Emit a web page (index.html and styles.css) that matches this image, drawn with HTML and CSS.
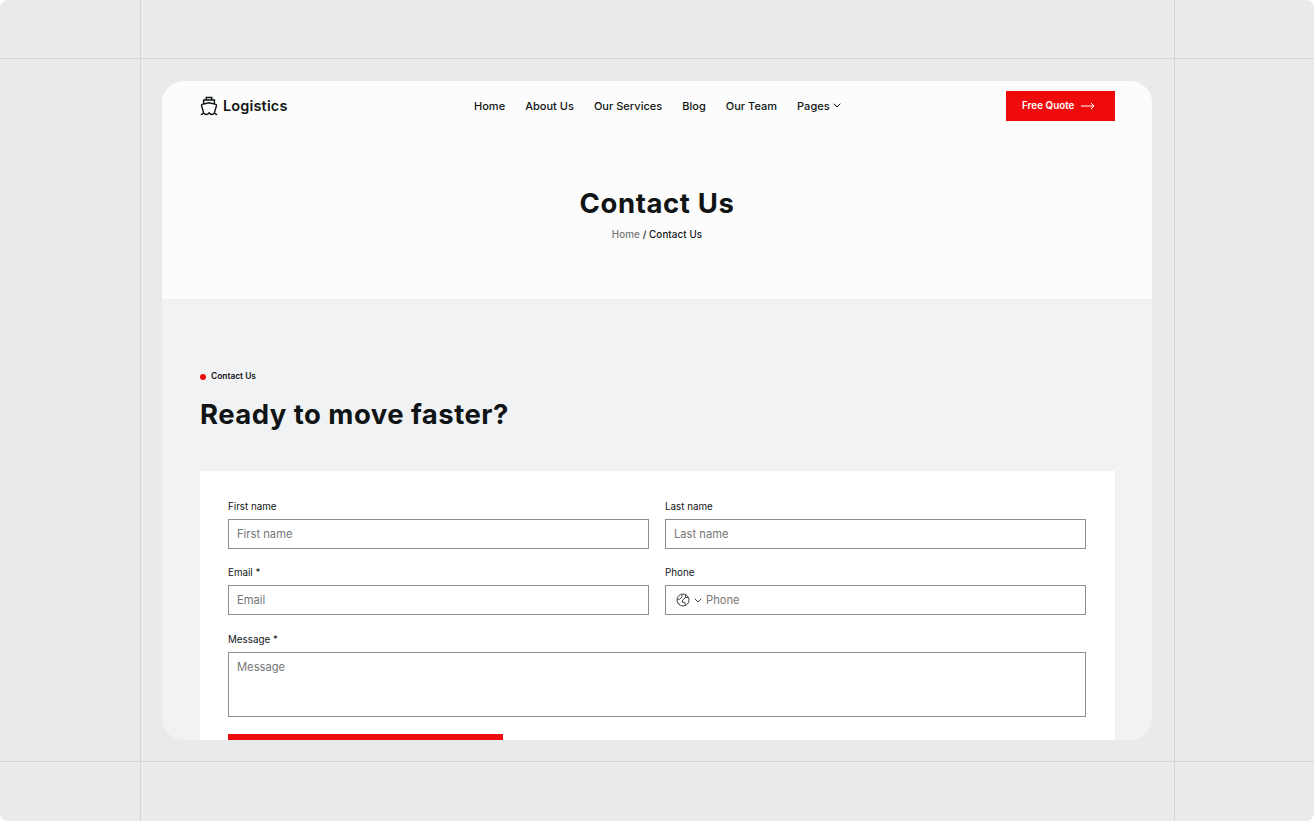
FILE: index.html
```
<!DOCTYPE html>
<html lang="en">
<head>
    <meta charset="UTF-8">
    <meta name="viewport" content="width=device-width, initial-scale=1.0">
    <title>Contact Us - Logistics</title>
    <link rel="stylesheet" href="styles.css">
</head>
<body>
    <div class="stage">
        <div class="page">
            <header class="header">
                <a class="logo" href="#">
                    <svg class="logo-icon" viewBox="0 0 18 20">
                        <path d="M6.200 4V1.500h5.600V4M3.600 8.500V4h10.800v4.500M3.500 16.500 1.500 9.500Q1.300 8.600 2.200 8.300L9 6.700l6.800 1.600q.9.300.7 1.200l-2 7M.8 18.500c1.700 0 2.200-.7 2.800-1.700.8 1.100 1.400 1.700 2.600 1.700S8.300 17.800 9 16.800c.8 1 1.500 1.700 2.700 1.700s2-.6 2.700-1.700c.7 1 1.200 1.700 2.800 1.700"/>
                    </svg>
                    <span class="logo-text">Logistics</span>
                </a>
                <nav class="nav">
                    <a href="#">Home</a>
                    <a href="#">About Us</a>
                    <a href="#">Our Services</a>
                    <a href="#">Blog</a>
                    <a href="#">Our Team</a>
                    <a class="nav-pages" href="#">Pages
                        <svg class="chevron" viewBox="0 0 8 5"><path d="M.7.7 4 4 7.300.7"/></svg>
                    </a>
                </nav>
                <a class="quote" href="#">
                    <span>Free Quote</span>
                    <svg class="arrow" viewBox="0 0 14 8"><path d="M0 4h13M10 1l3 3-3 3"/></svg>
                </a>
            </header>

            <section class="hero">
                <h1>Contact Us</h1>
                <p class="breadcrumb"><a href="#">Home</a> <span>/</span> <span>Contact Us</span></p>
            </section>

            <section class="contact">
                <p class="eyebrow">Contact Us</p>
                <h2>Ready to move faster?</h2>

                <form class="form">
                    <div class="field">
                        <label for="firstName">First name</label>
                        <input type="text" id="firstName" placeholder="First name">
                    </div>
                    <div class="field">
                        <label for="lastName">Last name</label>
                        <input type="text" id="lastName" placeholder="Last name">
                    </div>
                    <div class="field">
                        <label for="email">Email *</label>
                        <input type="email" id="email" placeholder="Email">
                    </div>
                    <div class="field">
                        <label for="phone">Phone</label>
                        <div class="phone">
                            <svg class="globe" viewBox="0 0 14 14">
                                <circle cx="7" cy="7" r="6"/>
                                <path d="M1.200 6.200h2.600l2.400-2.400L5.500 1.400M1.700 9.500 4.200 12.200M12.200 4.500H9.500L6.500 7v2.300h2.300l.6 3.100M9.500 4.500V1.800"/>
                            </svg>
                            <svg class="chevron" viewBox="0 0 8 5"><path d="M.7.7 4 4 7.300.7"/></svg>
                            <input type="tel" id="phone" placeholder="Phone">
                        </div>
                    </div>
                    <div class="field field-wide">
                        <label for="message">Message *</label>
                        <textarea id="message" placeholder="Message"></textarea>
                    </div>
                    <button class="submit" type="submit" aria-label="Submit"></button>
                </form>
            </section>
        </div>
    </div>
</body>
</html>
```
FILE: styles.css
```
* {
    box-sizing: border-box;
}
body {
    margin: 0;
    background: #fff;
    color: #101414;
    font-family: Inter, "Liberation Sans", sans-serif;
}
a {
    color: inherit;
    text-decoration: none;
}
svg {
    fill: none;
    stroke: currentColor;
    flex: none;
}
h1, h2, p {
    margin: 0;
}

/* backdrop with guide lines */
.stage {
    height: 821px;
    padding: 81px 162px;
    border-radius: 8px;
    background:
        linear-gradient(#d3d6d5, #d3d6d5) 140px 0 / 1px 100% no-repeat,
        linear-gradient(#d3d6d5, #d3d6d5) 1174px 0 / 1px 100% no-repeat,
        linear-gradient(#d3d6d5, #d3d6d5) 0 58px / 100% 1px no-repeat,
        linear-gradient(#d3d6d5, #d3d6d5) 0 761px / 100% 1px no-repeat,
        #e9ebea;
}
.page {
    height: 659px;
    overflow: hidden;
    border-radius: 22px;
    background: #f1f2f4;
}

/* header */
.header {
    display: grid;
    grid-template-columns: 274px 1fr 109px;
    align-items: center;
    height: 49px;
    padding: 0 37px 0 38px;
    background: #fcfcfc;
}
.logo {
    display: flex;
    align-items: center;
    gap: 5px;
}
.logo-icon {
    width: 18px;
    height: 20px;
    stroke-width: 1.4;
}
.logo-text {
    font-size: 14.5px;
    font-weight: 600;
    letter-spacing: 0.15px;
}
.nav {
    display: flex;
    gap: 20px;
    font-size: 11px;
    font-weight: 500;
    letter-spacing: 0.02px;
    white-space: nowrap;
}
.nav-pages {
    display: flex;
    align-items: center;
    gap: 3px;
}
.chevron {
    width: 8px;
    height: 5px;
}
.quote {
    display: flex;
    align-items: center;
    gap: 7px;
    height: 30px;
    padding-left: 16px;
    background: #ef0b0b;
    color: #fff;
    font-size: 9.8px;
    font-weight: 600;
    letter-spacing: 0.05px;
    white-space: nowrap;
}
.arrow {
    width: 14px;
    height: 8px;
}

/* hero */
.hero {
    height: 169px;
    padding-top: 55px;
    background: #fcfcfc;
    text-align: center;
}
h1, h2 {
    font-size: 27.5px;
    line-height: 36px;
    font-weight: 700;
    letter-spacing: 0.6px;
}
.breadcrumb {
    margin-top: 7px;
    font-size: 9.8px;
    line-height: 14px;
    font-weight: 500;
    letter-spacing: 0.1px;
}
.breadcrumb a {
    color: #777;
}

/* contact */
.contact {
    padding: 70px 37px 0 38px;
}
.eyebrow {
    display: flex;
    align-items: center;
    gap: 5px;
    font-size: 8.4px;
    line-height: 15px;
    font-weight: 600;
}
.eyebrow::before {
    content: "";
    width: 6px;
    height: 6px;
    border-radius: 50%;
    background: #ef0b0b;
}
h2 {
    margin-top: 12px;
    letter-spacing: 0.46px;
}
.form {
    display: grid;
    grid-template-columns: 1fr 1fr;
    gap: 16px;
    height: 300px;
    margin-top: 39px;
    padding: 28px 29px 0 28px;
    align-content: start;
    background: #fff;
}
.field label {
    display: block;
    margin-bottom: 5px;
    padding-top: 1px;
    font-size: 9.8px;
    line-height: 14px;
}
.field input, .field textarea {
    display: block;
    width: 100%;
    height: 30px;
    padding: 0 8px;
    border: 1px solid #8d8f8f;
    border-radius: 0;
    background: #fff;
    font-family: inherit;
    font-size: 11.2px;
}
.field textarea {
    height: 65px;
    padding: 7px 8px;
    resize: none;
}
.field ::placeholder {
    color: #767676;
}
.field .phone {
    display: flex;
    align-items: center;
    height: 30px;
    padding-left: 10px;
    border: 1px solid #8d8f8f;
    color: #444;
}
.phone .globe {
    width: 14px;
    height: 14px;
    margin-right: 4px;
}
.phone input {
    height: 28px;
    padding: 0 4px;
    border: 0;
}
.field-wide {
    grid-column: 1 / -1;
    padding-top: 1px;
}
.submit {
    width: 275px;
    height: 30px;
    margin-top: 1px;
    border: 0;
    background: #ef0b0b;
}
```
